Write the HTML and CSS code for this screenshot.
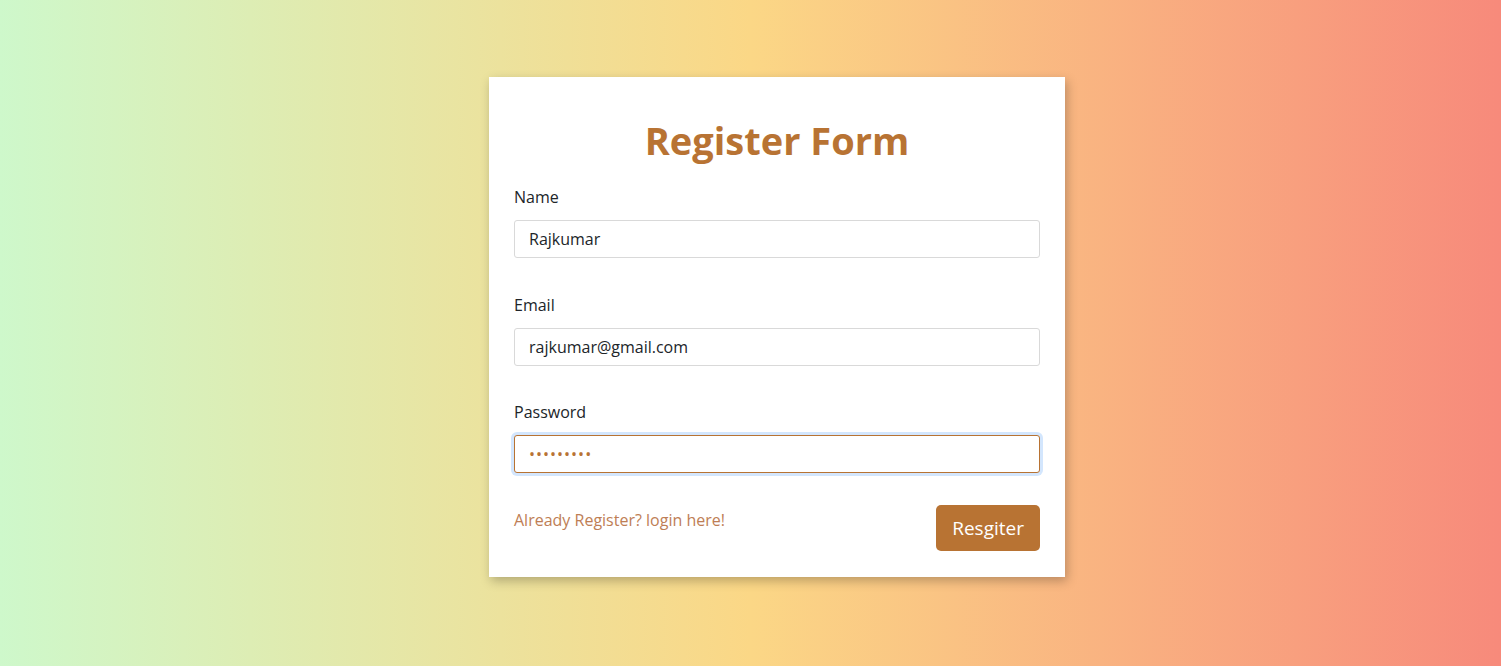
FILE: index.html
```html
<!DOCTYPE html>
<html lang="en">
<head>
<meta charset="utf-8">
<title>Register Form</title>
<link rel="stylesheet" href="styles.css">
</head>
<body>
<main class="page">
  <form class="card">
    <h1 class="title">Register Form</h1>
    <div class="group">
      <label class="label" for="name">Name</label>
      <input class="field" id="name" type="text" value="Rajkumar">
    </div>
    <div class="group">
      <label class="label" for="email">Email</label>
      <input class="field" id="email" type="email" value="rajkumar@gmail.com">
    </div>
    <div class="group">
      <label class="label" for="pw">Password</label>
      <input class="field field-focus" id="pw" type="password" value="123456789">
    </div>
    <div class="actions">
      <a class="link" href="#">Already Register? login here!</a>
      <button class="btn" type="button">Resgiter</button>
    </div>
  </form>
</main>
</body>
</html>
```

FILE: styles.css
```css
* { box-sizing: border-box; }
html, body { margin: 0; height: 100%; }
body {
  font-family: "Open Sans", "Noto Sans", sans-serif;
  font-size: 16px;
  line-height: 1.5;
  color: #212529;
  background: linear-gradient(to right, #cef8cb, #fbd786 50%, #f78a7b);
}
.page {
  display: flex;
  justify-content: center;
  padding-top: 77px;
  padding-left: 53px;
}
.card {
  width: 576px;
  height: 500px;
  background: #fff;
  padding: 25px;
  box-shadow: 2px 4px 10px rgba(0, 0, 0, 0.25);
}
.title {
  margin: 14px 0 21px;
  text-align: center;
  font-size: 38px;
  line-height: 48px;
  font-weight: 700;
  color: #b87333;
}
.group {
  display: flex;
  flex-direction: column;
  margin-bottom: 34.5px;
}
.label {
  line-height: 24px;
  margin-bottom: 11px;
}
.field {
  height: 38px;
  padding: 6px 14px;
  font: inherit;
  color: #212529;
  border: 1px solid #d9d9d9;
  border-radius: 3px;
  background: #fff;
  outline: none;
}
.field-focus {
  border-color: #b87333;
  color: #b87333;
  letter-spacing: 1px;
  box-shadow: 0 0 0 3px #d3e6fd;
}
.actions {
  display: flex;
  justify-content: space-between;
  align-items: flex-start;
  margin-top: -3px;
}
.link {
  margin-top: 3px;
  color: #be7e55;
  text-decoration: none;
}
.btn {
  background: #b87333;
  color: #fff;
  border: none;
  border-radius: 5px;
  font: inherit;
  font-size: 19px;
  line-height: 30px;
  padding: 8px 16px;
  cursor: pointer;
}
```
